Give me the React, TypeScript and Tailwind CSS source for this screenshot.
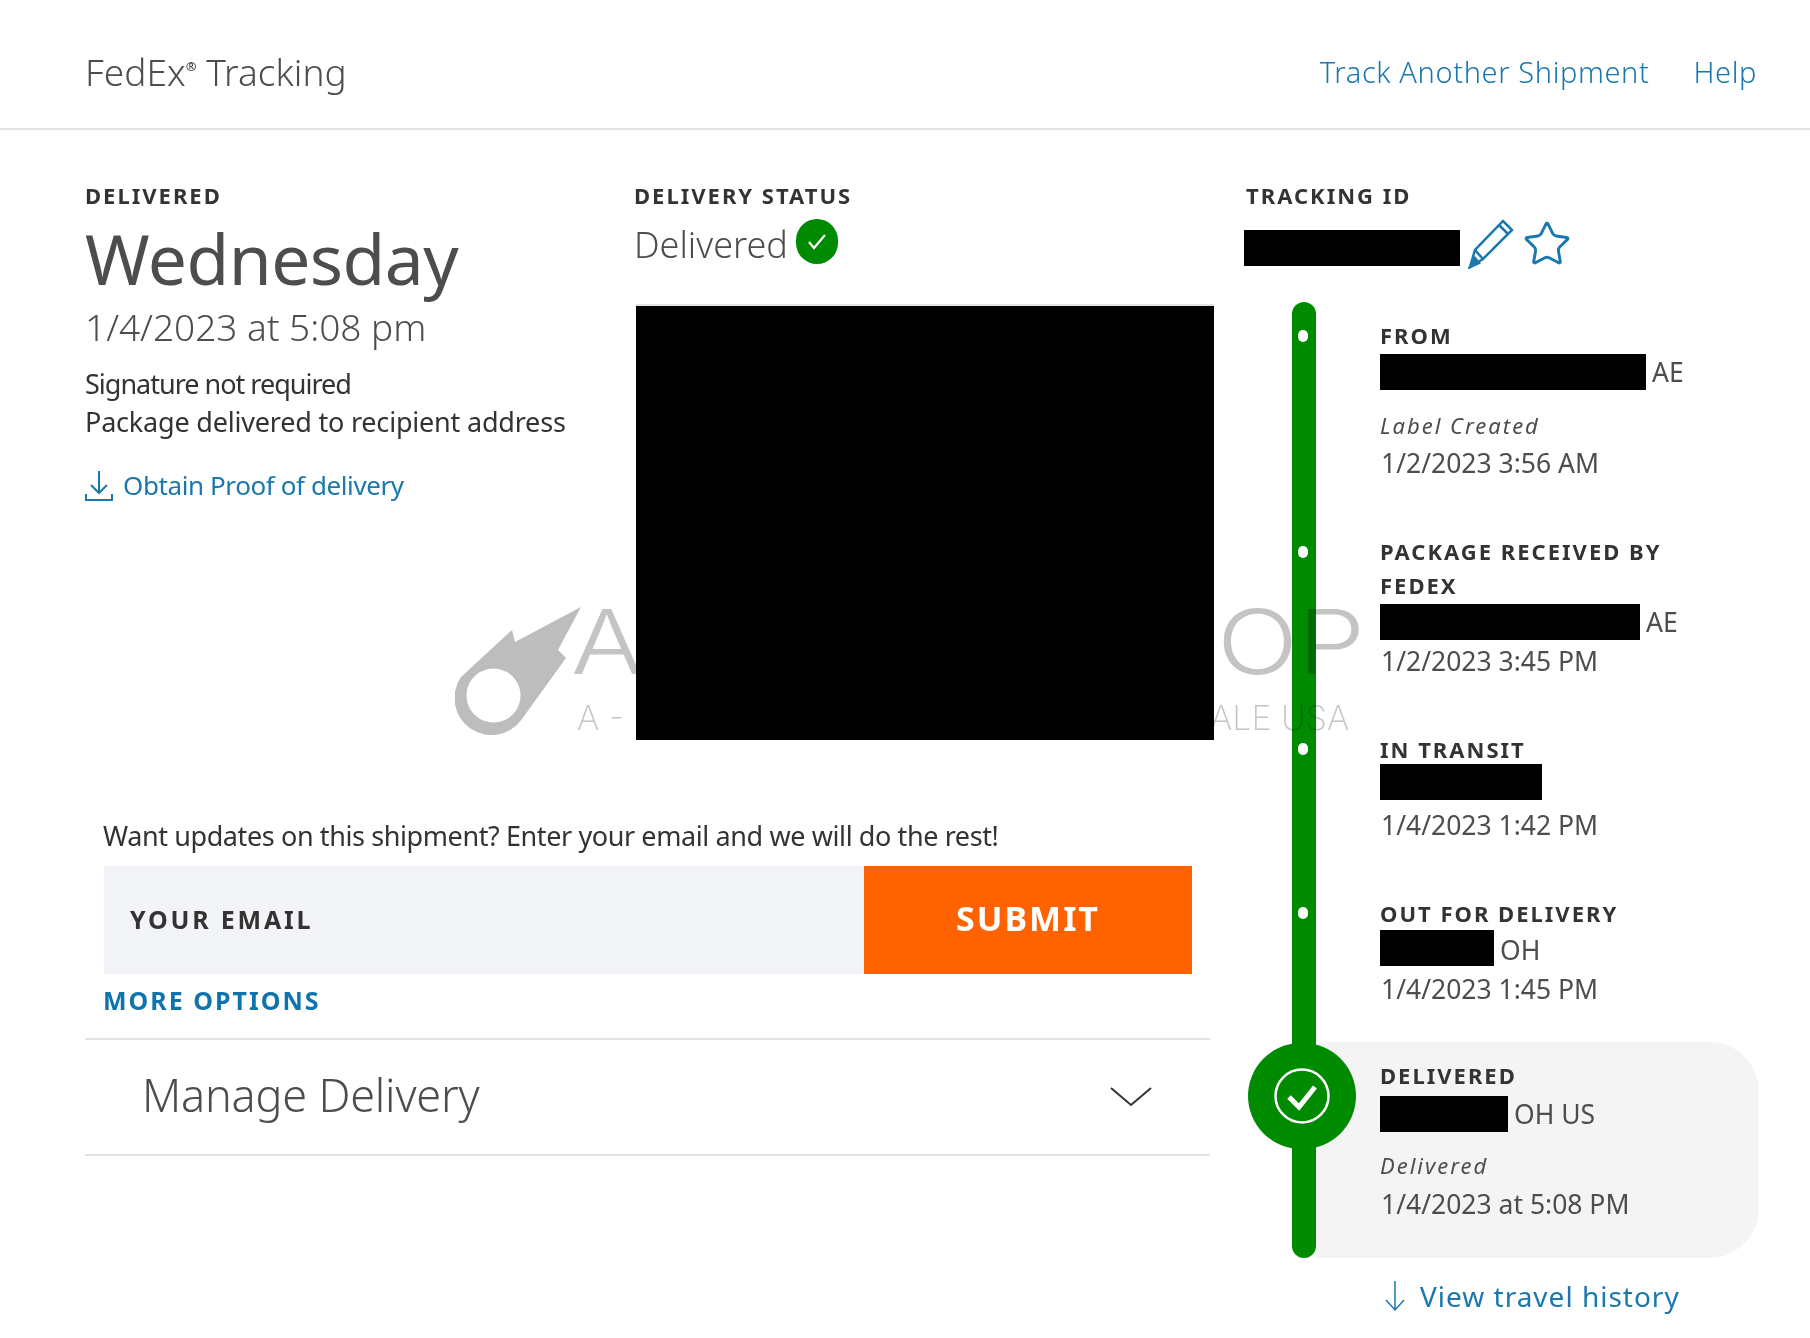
import { Star } from 'lucide-react';

const FONT = "font-['Noto_Sans',sans-serif]";

const Label = ({ children }: { children: React.ReactNode }) => (
    <div className="text-[22px] leading-[34px] font-bold tracking-[2px] text-[#333333]">{children}</div>
);

const Black = ({ w }: { w: string }) => <span className={`inline-block h-[36px] bg-black ${w}`} />;

const Dot = ({ top }: { top: string }) => (
    <span className={`absolute left-[-82px] w-[10px] h-[12px] rounded-full bg-white ${top}`} />
);

export default function App() {
    return (
        <div className={`${FONT} relative w-[1810px] h-[1338px] bg-white text-[#333333] overflow-hidden`}>
            <header className="box-border flex items-center justify-between h-[130px] pt-[16px] pl-[85px] pr-[53px] border-b-2 border-[#e3e3e3]">
                <div className="text-[37px] font-light tracking-[0.05px] text-[#4d4d4d]">
                    FedEx<sup className="text-[13px] leading-none font-bold relative top-[-15px]">®</sup> Tracking
                </div>
                <nav className="flex gap-[44px] text-[29px] font-light tracking-[0.6px] text-[#1a78ae]">
                    <span>Track Another Shipment</span>
                    <span>Help</span>
                </nav>
            </header>

            <main className="flex pl-[85px] pt-[48px]">
                <section className="w-[1125px] shrink-0">
                    <div className="flex h-[638px]">
                        <div className="w-[549px] shrink-0">
                            <Label>DELIVERED</Label>
                            <div className="mt-[5px] text-[69.5px] leading-[82px] text-[#4d4d4d] tracking-[-0.5px]">Wednesday</div>
                            <div className="mt-[4px] text-[37px] leading-[48px] font-light text-[#4d4d4d]">1/4/2023 at 5:08 pm</div>
                            <div className="mt-[14px] text-[27px] leading-[38px] tracking-[-0.2px]">
                                <div className="tracking-[-1px]">Signature not required</div>
                                <div>Package delivered to recipient address</div>
                            </div>
                            <div className="mt-[25px] flex items-center gap-[10px] text-[26px] tracking-[-0.4px] text-[#1a78ae]">
                                <svg width="28" height="32" viewBox="0 0 28 32" fill="none" stroke="#1a78ae" strokeWidth="2">
                                    <path d="M14 1v21M6 15l8 8 8-8" />
                                    <path d="M1 24v6h26v-6" />
                                </svg>
                                <span>Obtain Proof of delivery</span>
                            </div>
                        </div>
                        <div className="flex-1">
                            <Label>DELIVERY STATUS</Label>
                            <div className="flex items-center gap-[8px] h-[48px] mt-[9px]">
                                <span className="text-[36px] font-light text-[#4d4d4d]">Delivered</span>
                                <span className="flex items-center justify-center w-[42px] h-[45px] mb-[8px] rounded-full bg-[#008a00]">
                                    <svg width="24" height="24" viewBox="0 0 24 24" fill="none" stroke="#ffffff" strokeWidth="2.2">
                                        <path d="M4 13l5 6L20 6" />
                                    </svg>
                                </span>
                            </div>
                            <div className="mt-[37px] ml-[2px] w-[578px] h-[434px] bg-black shadow-[0_-2px_0_#e3e3e3]" />
                        </div>
                    </div>

                    <div className="pl-[19px] pr-[18px]">
                        <div className="-ml-[1px] text-[27px] leading-[40px] tracking-[-0.4px]">Want updates on this shipment? Enter your email and we will do the rest!</div>
                        <div className="flex h-[108px] mt-[10px]">
                            <div className="flex-1 flex items-center pl-[26px] bg-[#f2f4f8] text-[25px] font-bold tracking-[2.8px] text-[#333333]">YOUR EMAIL</div>
                            <div className="w-[328px] flex items-center justify-center pb-[4px] bg-[#ff6200] text-[34px] font-bold tracking-[2px] text-white">SUBMIT</div>
                        </div>
                        <div className="-ml-[1px] mt-[6px] text-[25px] leading-[40px] font-bold tracking-[2px] text-[#0f74ad]">MORE OPTIONS</div>
                    </div>
                    <div className="mt-[18px] box-border flex items-center justify-between h-[118px] pl-[57px] pr-[58px] border-y-2 border-[#e3e3e3]">
                        <span className="pb-[4px] text-[45px] font-light tracking-[-0.2px] text-[#4d4d4d]">Manage Delivery</span>
                        <svg width="42" height="20" viewBox="0 0 42 20" fill="none" stroke="#333333" strokeWidth="2">
                            <path d="M1 1l20 17L41 1" />
                        </svg>
                    </div>
                </section>

                <section className="ml-[34px]">
                    <div className="pl-[2px]"><Label>TRACKING ID</Label></div>
                    <div className="flex items-center h-[48px] mt-[12px]">
                        <span className="w-[216px] h-[36px] bg-black" />
                        <svg className="ml-[8px] mb-[8px]" width="46" height="50" viewBox="0 0 46 50" fill="none" stroke="#1a78ae" strokeWidth="2.5">
                            <path d="M2 48l5-17L35 2l9 9-29 29z" />
                            <path d="M7 31l8 9M31 6l9 9" />
                            <path d="M2 48l5-9 4 5z" fill="#1a78ae" />
                        </svg>
                        <Star size={50} strokeWidth={1.4} className="ml-[8px] mb-[8px] text-[#1a78ae]" />
                    </div>

                    <div className="relative mt-[30px] w-[515px] h-[956px] pl-[136px]">
                        <div className="absolute left-[71px] right-0 bottom-0 h-[216px] rounded-r-[50px] bg-[#f4f4f5]" />
                        <div className="absolute left-[48px] top-0 bottom-0 w-[24px] rounded-full bg-[#008a00]" />
                        <div className="absolute left-[4px] top-[741px] w-[108px] h-[106px] rounded-full bg-[#008a00] flex items-center justify-center">
                            <svg width="56" height="56" viewBox="0 0 56 56" fill="none" stroke="#ffffff">
                                <circle cx="28" cy="28" r="26.5" strokeWidth="2.5" />
                                <path d="M15 29l10 10 16-20" strokeWidth="5" />
                            </svg>
                        </div>

                        <div className="relative text-[26.5px] leading-[38px] text-[#4d4d4d]">
                            <div className="relative pt-[16px]">
                                <Dot top="top-[28px]" />
                                <Label>FROM</Label>
                                <div className="mt-[2px] flex items-center h-[36px] gap-[6px]"><Black w="w-[266px]" /><span>AE</span></div>
                                <div className="mt-[18px] text-[22px] leading-[34px] italic tracking-[2px]">Label Created</div>
                                <div className="mt-[2px] pl-[1px]">1/2/2023 3:56 AM</div>
                            </div>
                            <div className="relative mt-[52px] w-[340px]">
                                <Dot top="top-[12px]" />
                                <Label>PACKAGE RECEIVED BY FEDEX</Label>
                                <div className="mt-[2px] flex items-center h-[36px] gap-[6px]"><Black w="w-[260px]" /><span>AE</span></div>
                                <div className="mt-[2px] pl-[1px]">1/2/2023 3:45 PM</div>
                            </div>
                            <div className="relative mt-[52px]">
                                <Dot top="top-[11px]" />
                                <Label>IN TRANSIT</Label>
                                <div className="mt-[-2px] flex items-center h-[36px]"><Black w="w-[162px]" /></div>
                                <div className="mt-[6px] pl-[1px]">1/4/2023 1:42 PM</div>
                            </div>
                            <div className="relative mt-[52px]">
                                <Dot top="top-[11px]" />
                                <Label>OUT FOR DELIVERY</Label>
                                <div className="flex items-center h-[36px] gap-[6px]"><Black w="w-[114px]" /><span className="mt-[3px]">OH</span></div>
                                <div className="mt-[4px] pl-[1px]">1/4/2023 1:45 PM</div>
                            </div>
                            <div className="relative mt-[50px]">
                                <Label>DELIVERED</Label>
                                <div className="mt-[4px] flex items-center h-[36px] gap-[6px]"><Black w="w-[128px]" /><span>OH US</span></div>
                                <div className="mt-[16px] text-[22px] leading-[34px] italic tracking-[2px]">Delivered</div>
                                <div className="mt-[3px] pl-[1px]">1/4/2023 at 5:08 PM</div>
                            </div>
                        </div>
                    </div>

                    <div className="mt-[17px] ml-[136px] flex items-center gap-[10px] text-[28px] tracking-[1px] text-[#1a78ae]">
                        <svg width="30" height="34" viewBox="0 0 22 34" fill="none" stroke="#1a78ae" strokeWidth="1.5">
                            <path d="M11 2v29M2 21l9 10 9-10" />
                        </svg>
                        <span>View travel history</span>
                    </div>
                </section>
            </main>

            {/* watermark, sits over the page */}
            <div className="absolute left-[455px] top-[605px] w-[905px] h-[130px] pointer-events-none mix-blend-multiply font-['Inter',sans-serif] font-extralight text-[#c4c4c4]">
                <svg className="absolute left-0 top-0" width="126" height="130" viewBox="0 0 126 130">
                    <path fillRule="evenodd" fill="#bdbdbd" d="M126 2L103 45l8 8-44 61A37 37 0 1 1 6 72L57 25l3 12zM38.500 63.500a27 27 0 1 0 .01 0z" />
                </svg>
                <span className="absolute left-[116px] top-[-17px] text-[89px] leading-[108px] font-light origin-left scale-x-[1.2]">A</span>
                <span className="absolute left-[762px] top-[-17px] text-[89px] leading-[108px] font-light origin-left scale-x-[1.2]">OP</span>
                <span className="absolute left-[122px] top-[90px] text-[34px] leading-[46px]">A -</span>
                <span className="absolute left-[755px] top-[90px] text-[34px] leading-[46px]">ALE USA</span>
            </div>
        </div>
    );
}
